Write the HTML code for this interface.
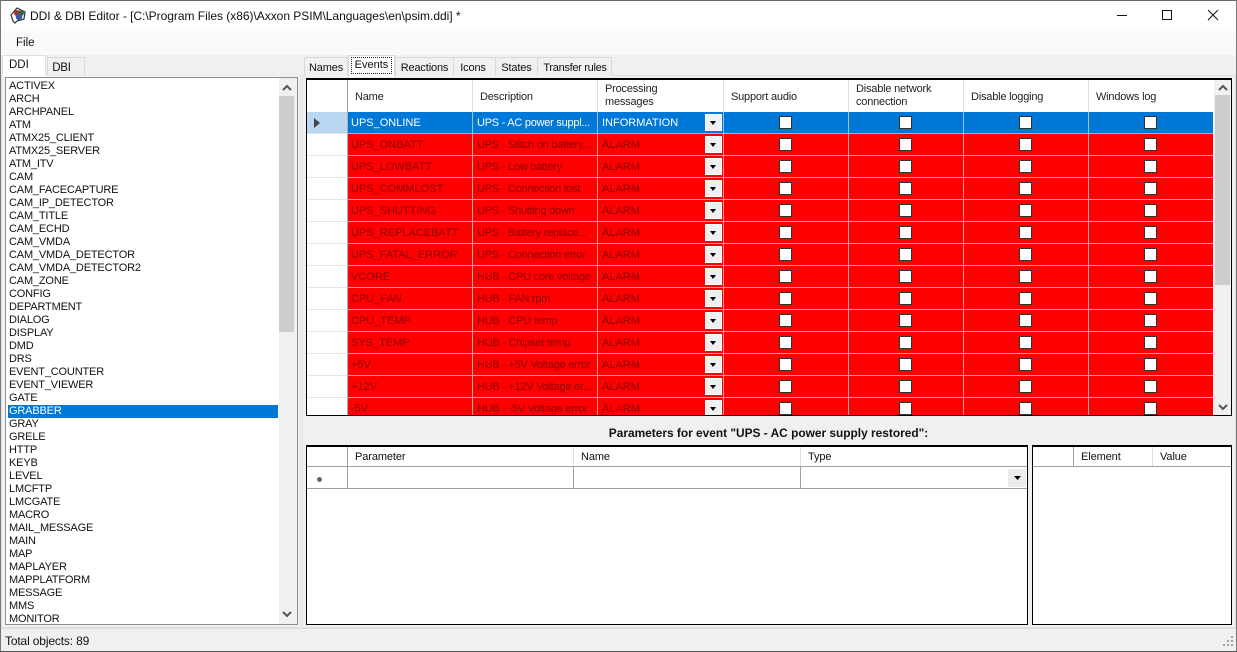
<!DOCTYPE html>
<html><head><meta charset="utf-8"><style>
html,body{margin:0;padding:0}
body{width:1237px;height:652px;overflow:hidden;position:relative;background:#f0f0f0;font:11px/13px "Liberation Sans",sans-serif;color:#111}
div,span,i,b{box-sizing:border-box}
.a{position:absolute}
.list{left:8px;top:80px;width:270px;height:544px;overflow:hidden;position:absolute;letter-spacing:-.17px}
.list div{height:13px;line-height:13px;white-space:nowrap;padding-left:1px}
.list .s{background:#0078d7;color:#fff;margin-left:-2px;padding-left:3px}
.tab{position:absolute;top:57px;height:19px;border:1px solid #d9d9d9;border-bottom:0;background:#f0f0f0;text-align:center;line-height:20px;letter-spacing:-.15px}
.row{position:absolute;left:348px;width:865px;height:22px;background:#f00;display:flex;border-bottom:1px solid #e0a0a0;color:#8a0000;font-size:11px;line-height:22px}
.row.sel{background:#0078d7;color:#fff;border-bottom-color:#a0b8d0}
.row span{display:block;position:relative;height:21px;border-right:1px solid #e8a0a0;padding-left:3px;white-space:nowrap;overflow:hidden;flex:none}
.row.sel span{border-right-color:#a0c0e0}
.row span:nth-child(1){width:125px}
.row span:nth-child(2){width:125px;padding-left:4px;letter-spacing:-.25px}
.row span:nth-child(3){width:126px;padding-left:4px}
.row span:nth-child(4){width:125px}
.row span:nth-child(5){width:115px}
.row span:nth-child(6){width:125px}
.row span:nth-child(7){width:125px}
.row span:nth-child(8){width:125px;border-right:0}
.cb{position:absolute;left:50%;margin-left:-7px;top:4px;width:13px;height:13px;background:#fff;border:1px solid #333}
.row .dd{position:absolute;left:107px;top:2px;width:17px;height:17px;background:#f0f0f0;border:1px solid #fff}
.dd:after{content:"";position:absolute;left:4px;top:6px;border:3px solid transparent;border-top:4px solid #000;border-bottom:0}
.rh{position:absolute;left:307px;width:40px;height:22px;background:#fff;border-bottom:1px solid #e4e4e4}
.hd{position:absolute;top:0;height:32px;background:#fff;border-right:1px solid #e0e0e0;line-height:13px;color:#222;letter-spacing:-.2px}
.hc{position:absolute;left:7px;top:11px;white-space:nowrap}
.hc.two{top:3px}
.sb{position:absolute;background:#f0f0f0}
.th{position:absolute;background:#cdcdcd}
.w{position:absolute;left:-307px;top:-80px;width:1237px;height:500px}
.lbl{letter-spacing:-.1px}
</style></head><body>
<!-- window frame -->
<div class="a" style="left:0;top:0;width:1237px;height:31px;background:#fff;border-top:1px solid #666"></div>
<div class="a" style="left:0;top:31px;width:1237px;height:24px;background:#f9f9f9"></div>
<div class="a" style="left:0;top:0;width:1px;height:652px;background:#777"></div>
<div class="a" style="left:1236px;top:0;width:1px;height:652px;background:#777"></div>
<div class="a" style="left:0;top:651px;width:1237px;height:1px;background:#555"></div>
<svg class="a" style="left:9px;top:7px" width="18" height="18" viewBox="0 0 18 18"><path d="M2 8 L8 1 L16 5 L15 12 L8 14 L6 16 L4 14 Z" fill="#fff" stroke="#333" stroke-width="1.2"/><circle cx="8" cy="6" r="3" fill="#b03030"/><circle cx="12" cy="6" r="3" fill="#306a4a"/><circle cx="10" cy="10" r="3.2" fill="#3a5aa0"/></svg>
<div class="a" style="left:30px;top:9px;font-size:12px;line-height:15px;white-space:nowrap;color:#111;letter-spacing:-.03px">DDI &amp; DBI Editor - [C:\Program Files (x86)\Axxon PSIM\Languages\en\psim.ddi] *</div>
<svg class="a" style="left:1110px;top:5px" width="127" height="22" viewBox="0 0 127 22"><path d="M7 10.5H17" stroke="#111" fill="none"/><rect x="52.5" y="5.5" width="9" height="9" fill="none" stroke="#111"/><path d="M98 5L108 15M108 5L98 15" stroke="#111" fill="none"/></svg>
<div class="a" style="left:16px;top:36px;font-size:11.5px;line-height:14px">File</div>

<!-- left tabs -->
<div class="a" style="left:2px;top:55px;width:44px;height:22px;background:#fff;border:1px solid #e0e0e0;border-bottom:0;font-size:11.5px;line-height:18px;padding-left:6px">DDI</div>
<div class="tab" style="left:47px;width:38px;height:19px;padding-right:9px;font-size:11.5px;letter-spacing:-.2px">DBI</div>
<div class="a" style="left:1px;top:75px;width:300px;height:553px;border:1px solid #e0e0e0;border-top:0"></div>
<div class="a" style="left:2px;top:75px;width:44px;height:2px;background:#fff"></div>
<!-- list -->
<div class="a" style="left:5px;top:77px;width:293px;height:548px;background:#fff;border:1px solid #8f8f8f"></div>
<div class="list">
<div>ACTIVEX</div><div>ARCH</div><div>ARCHPANEL</div><div>ATM</div><div>ATMX25_CLIENT</div><div>ATMX25_SERVER</div><div>ATM_ITV</div><div>CAM</div><div>CAM_FACECAPTURE</div><div>CAM_IP_DETECTOR</div><div>CAM_TITLE</div><div>CAM_ECHD</div><div>CAM_VMDA</div><div>CAM_VMDA_DETECTOR</div><div>CAM_VMDA_DETECTOR2</div><div>CAM_ZONE</div><div>CONFIG</div><div>DEPARTMENT</div><div>DIALOG</div><div>DISPLAY</div><div>DMD</div><div>DRS</div><div>EVENT_COUNTER</div><div>EVENT_VIEWER</div><div>GATE</div><div class="s">GRABBER</div><div>GRAY</div><div>GRELE</div><div>HTTP</div><div>KEYB</div><div>LEVEL</div><div>LMCFTP</div><div>LMCGATE</div><div>MACRO</div><div>MAIL_MESSAGE</div><div>MAIN</div><div>MAP</div><div>MAPLAYER</div><div>MAPPLATFORM</div><div>MESSAGE</div><div>MMS</div><div>MONITOR</div>
</div>
<div class="sb" style="left:279px;top:78px;width:18px;height:546px"></div>
<div class="th" style="left:279px;top:96px;width:15px;height:236px"></div>
<svg class="a" style="left:281px;top:84px" width="12" height="8"><path d="M2 6L6 2L10 6" fill="none" stroke="#555" stroke-width="2"/></svg>
<svg class="a" style="left:281px;top:610px" width="12" height="8"><path d="M2 2L6 6L10 2" fill="none" stroke="#555" stroke-width="2"/></svg>

<!-- right tabs -->
<div class="a" style="left:302px;top:75px;width:934px;height:553px;border:1px solid #e0e0e0"></div>
<div class="tab" style="left:304px;width:44px">Names</div>
<div class="tab" style="left:395px;width:59px">Reactions</div>
<div class="tab" style="left:453px;width:43px;padding-right:3px">Icons</div>
<div class="tab" style="left:495px;width:43px">States</div>
<div class="tab" style="left:537px;width:75px;letter-spacing:-.3px;padding-left:1px">Transfer rules</div>
<div class="a" style="left:348px;top:55px;width:47px;height:22px;background:#fff;border:1px solid #d9d9d9;border-bottom:0"></div>
<div class="a" style="left:351px;top:57px;width:41px;height:17px;border:1px dotted #222;text-align:center;line-height:15px">Events</div>

<!-- events grid -->
<div class="a" style="left:306px;top:78px;width:926px;height:338px;background:#fff;border:1px solid #000;border-width:2px 1px 1px 1px"></div>
<div class="a" style="left:307px;top:80px;width:906px;height:335px;overflow:hidden;background:#fff">
 <div style="position:absolute;left:0;top:0;width:906px;height:32px;background:#fff;border-bottom:1px solid #a0a0a0"></div>
 <div class="hd" style="left:0;width:41px;border-right:1px solid #a0a0a0"></div>
 <div class="hd" style="left:41px;width:125px"><div class="hc">Name</div></div>
 <div class="hd" style="left:166px;width:125px"><div class="hc">Description</div></div>
 <div class="hd" style="left:291px;width:126px"><div class="hc two">Processing<br>messages</div></div>
 <div class="hd" style="left:417px;width:125px"><div class="hc">Support audio</div></div>
 <div class="hd" style="left:542px;width:115px"><div class="hc two">Disable network<br>connection</div></div>
 <div class="hd" style="left:657px;width:125px"><div class="hc">Disable logging</div></div>
 <div class="hd" style="left:782px;width:124px;border-right:0"><div class="hc">Windows log</div></div>
</div>
<div class="a" style="left:307px;top:80px;width:906px;height:335px;overflow:hidden">
<div class="w">
<div class="rh" style="top:112px;background:#b9d7f0"><svg style="position:absolute;left:7px;top:6px" width="7" height="10"><path d="M0 0L6 5L0 10Z" fill="#444"/></svg></div>
<div class="rh" style="top:134px"></div><div class="rh" style="top:156px"></div><div class="rh" style="top:178px"></div><div class="rh" style="top:200px"></div><div class="rh" style="top:222px"></div><div class="rh" style="top:244px"></div><div class="rh" style="top:266px"></div><div class="rh" style="top:288px"></div><div class="rh" style="top:310px"></div><div class="rh" style="top:332px"></div><div class="rh" style="top:354px"></div><div class="rh" style="top:376px"></div><div class="rh" style="top:398px"></div>
<div class="a" style="left:347px;top:112px;width:1px;height:310px;background:#b0b0b0"></div>
<div class="row sel" style="top:112px"><span>UPS_ONLINE</span><span>UPS - AC power suppl...</span><span>INFORMATION<i class="dd"></i></span><span><i class="cb"></i></span><span><i class="cb"></i></span><span><i class="cb"></i></span><span><i class="cb"></i></span></div>
<div class="row" style="top:134px"><span>UPS_ONBATT</span><span>UPS - Stitch on battery...</span><span>ALARM<i class="dd"></i></span><span><i class="cb"></i></span><span><i class="cb"></i></span><span><i class="cb"></i></span><span><i class="cb"></i></span></div>
<div class="row" style="top:156px"><span>UPS_LOWBATT</span><span>UPS - Low battery</span><span>ALARM<i class="dd"></i></span><span><i class="cb"></i></span><span><i class="cb"></i></span><span><i class="cb"></i></span><span><i class="cb"></i></span></div>
<div class="row" style="top:178px"><span>UPS_COMMLOST</span><span>UPS - Connection lost</span><span>ALARM<i class="dd"></i></span><span><i class="cb"></i></span><span><i class="cb"></i></span><span><i class="cb"></i></span><span><i class="cb"></i></span></div>
<div class="row" style="top:200px"><span>UPS_SHUTTING</span><span>UPS - Shutting down</span><span>ALARM<i class="dd"></i></span><span><i class="cb"></i></span><span><i class="cb"></i></span><span><i class="cb"></i></span><span><i class="cb"></i></span></div>
<div class="row" style="top:222px"><span>UPS_REPLACEBATT</span><span>UPS - Battery replace...</span><span>ALARM<i class="dd"></i></span><span><i class="cb"></i></span><span><i class="cb"></i></span><span><i class="cb"></i></span><span><i class="cb"></i></span></div>
<div class="row" style="top:244px"><span>UPS_FATAL_ERROR</span><span>UPS - Connection error</span><span>ALARM<i class="dd"></i></span><span><i class="cb"></i></span><span><i class="cb"></i></span><span><i class="cb"></i></span><span><i class="cb"></i></span></div>
<div class="row" style="top:266px"><span>VCORE</span><span>HUB - CPU core voltage</span><span>ALARM<i class="dd"></i></span><span><i class="cb"></i></span><span><i class="cb"></i></span><span><i class="cb"></i></span><span><i class="cb"></i></span></div>
<div class="row" style="top:288px"><span>CPU_FAN</span><span>HUB - FAN rpm</span><span>ALARM<i class="dd"></i></span><span><i class="cb"></i></span><span><i class="cb"></i></span><span><i class="cb"></i></span><span><i class="cb"></i></span></div>
<div class="row" style="top:310px"><span>CPU_TEMP</span><span>HUB - CPU temp</span><span>ALARM<i class="dd"></i></span><span><i class="cb"></i></span><span><i class="cb"></i></span><span><i class="cb"></i></span><span><i class="cb"></i></span></div>
<div class="row" style="top:332px"><span>SYS_TEMP</span><span>HUB - Chipset temp</span><span>ALARM<i class="dd"></i></span><span><i class="cb"></i></span><span><i class="cb"></i></span><span><i class="cb"></i></span><span><i class="cb"></i></span></div>
<div class="row" style="top:354px"><span>+5V</span><span>HUB - +5V Voltage error</span><span>ALARM<i class="dd"></i></span><span><i class="cb"></i></span><span><i class="cb"></i></span><span><i class="cb"></i></span><span><i class="cb"></i></span></div>
<div class="row" style="top:376px"><span>+12V</span><span>HUB - +12V Voltage er...</span><span>ALARM<i class="dd"></i></span><span><i class="cb"></i></span><span><i class="cb"></i></span><span><i class="cb"></i></span><span><i class="cb"></i></span></div>
<div class="row" style="top:398px"><span>-5V</span><span>HUB - -5V Voltage error</span><span>ALARM<i class="dd"></i></span><span><i class="cb"></i></span><span><i class="cb"></i></span><span><i class="cb"></i></span><span><i class="cb"></i></span></div>
</div></div>
<div class="sb" style="left:1214px;top:80px;width:17px;height:335px"></div>
<div class="th" style="left:1215px;top:95px;width:15px;height:190px"></div>
<svg class="a" style="left:1217px;top:84px" width="12" height="8"><path d="M2 6L6 2L10 6" fill="none" stroke="#555" stroke-width="2"/></svg>
<svg class="a" style="left:1217px;top:403px" width="12" height="8"><path d="M2 2L6 6L10 2" fill="none" stroke="#555" stroke-width="2"/></svg>

<div class="a" style="left:306px;top:426px;width:925px;text-align:center;font-weight:bold;font-size:11.9px;line-height:14px;white-space:nowrap">Parameters for event "UPS - AC power supply restored":</div>

<!-- parameters grid -->
<div class="a" style="left:306px;top:445px;width:722px;height:180px;background:#fff;border:1px solid #000;border-width:2px 1px 1px 1px"></div>
<div class="a" style="left:307px;top:466px;width:720px;height:1px;background:#a0a0a0"></div>
<div class="a" style="left:307px;top:488px;width:720px;height:1px;background:#a0a0a0"></div>
<div class="a" style="left:347px;top:447px;width:1px;height:42px;background:#a0a0a0"></div>
<div class="a" style="left:573px;top:447px;width:1px;height:19px;background:#e0e0e0"></div>
<div class="a" style="left:573px;top:467px;width:1px;height:22px;background:#a0a0a0"></div>
<div class="a" style="left:800px;top:447px;width:1px;height:19px;background:#e0e0e0"></div>
<div class="a" style="left:800px;top:467px;width:1px;height:22px;background:#a0a0a0"></div>
<div class="a lbl" style="left:355px;top:451px">Parameter</div>
<div class="a lbl" style="left:581px;top:451px">Name</div>
<div class="a lbl" style="left:808px;top:451px">Type</div>
<div class="a" style="left:317px;top:477px;width:5px;height:5px;border-radius:50%;background:#666"></div>
<div class="a" style="left:1008px;top:469px;width:18px;height:18px;background:#ececec"></div>
<svg class="a" style="left:1014px;top:476px" width="7" height="4"><path d="M0 0H7L3.5 4Z" fill="#000"/></svg>

<!-- element grid -->
<div class="a" style="left:1032px;top:445px;width:200px;height:180px;background:#fff;border:1px solid #000;border-width:2px 1px 1px 1px"></div>
<div class="a" style="left:1033px;top:466px;width:198px;height:1px;background:#a0a0a0"></div>
<div class="a" style="left:1073px;top:447px;width:1px;height:19px;background:#a0a0a0"></div>
<div class="a" style="left:1152px;top:447px;width:1px;height:19px;background:#e0e0e0"></div>
<div class="a lbl" style="left:1081px;top:451px">Element</div>
<div class="a lbl" style="left:1160px;top:451px">Value</div>

<!-- status -->
<div class="a" style="left:1px;top:628px;width:1235px;height:1px;background:#dcdcdc"></div>
<div class="a" style="left:5px;top:634px;line-height:14px;font-size:12px;letter-spacing:-.15px">Total objects: 89</div>
<svg class="a" style="left:1222px;top:636px" width="12" height="12" fill="#a0a0a0"><rect x="9" y="0" width="2" height="2"/><rect x="5" y="4" width="2" height="2"/><rect x="9" y="4" width="2" height="2"/><rect x="1" y="8" width="2" height="2"/><rect x="5" y="8" width="2" height="2"/><rect x="9" y="8" width="2" height="2"/></svg>
</body></html>
